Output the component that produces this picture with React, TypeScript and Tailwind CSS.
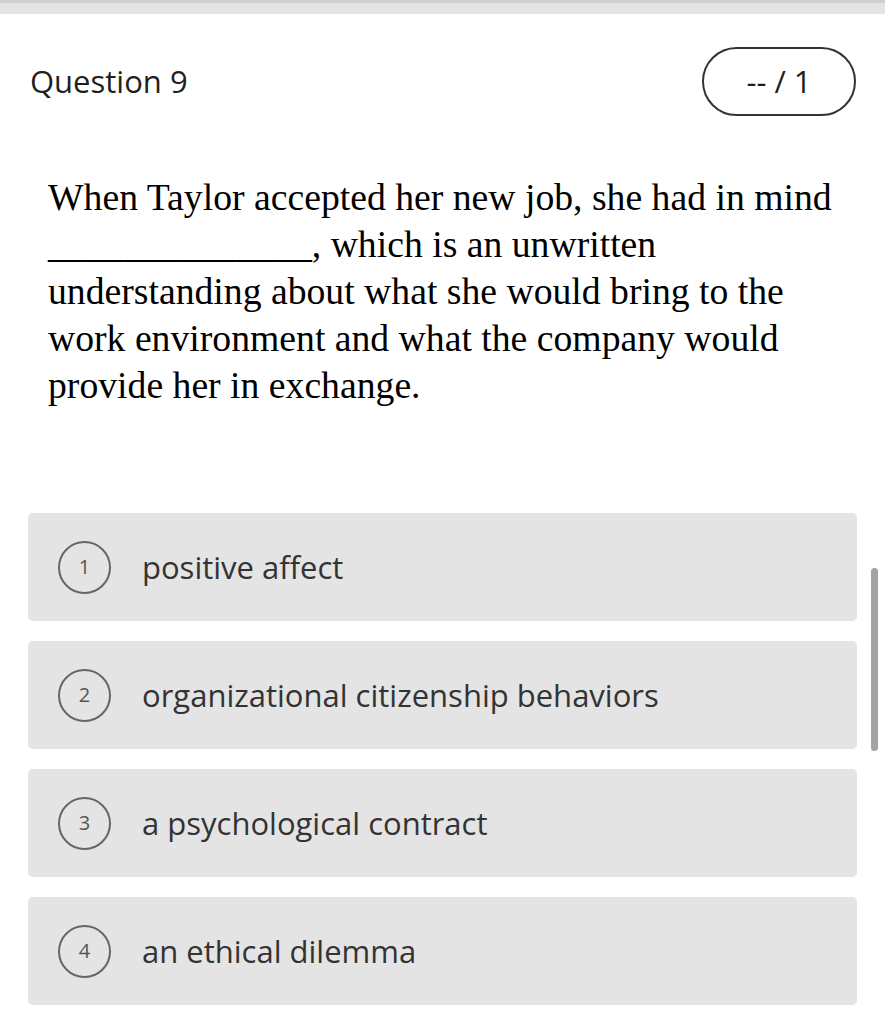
import React from 'react';

const options = [
  'positive affect',
  'organizational citizenship behaviors',
  'a psychological contract',
  'an ethical dilemma',
];

const App: React.FC = () => {
  return (
    <div className="relative w-[885px] h-[1024px] overflow-hidden bg-white font-['Open_Sans',sans-serif]">
      {/* top strip */}
      <div className="h-[14px] border-t-[3px] border-[#cfcfcf] bg-[#e4e4e4]" />

      <div className="flex items-center justify-between pl-[30px] pr-[29px] pt-[33px]">
        <h2 className="text-[31px] leading-none text-[#1f1f1f]">Question 9</h2>
        <div className="flex h-[69px] w-[154px] items-center justify-center rounded-full border-2 border-[#333] text-[31px] text-[#1f1f1f]">
          -- / 1
        </div>
      </div>

      <p className="mt-[58px] pl-[48px] pr-[37px] font-['Liberation_Serif',serif] text-[37.7px] leading-[47px] text-black">
        When Taylor accepted her new job, she had in mind ______________, which is an unwritten understanding about
        what she would bring to the work environment and what the company would provide her in exchange.
      </p>

      <div className="mt-[104px] flex flex-col gap-[20px] pl-[28px] pr-[28px]">
        {options.map((opt, i) => (
          <div key={i} className="flex h-[108px] items-center rounded-[5px] bg-[#e4e4e4] pl-[30px]">
            <div className="flex h-[53px] w-[53px] items-center justify-center rounded-full border-2 border-[#666] text-[20px] text-[#555]">
              {i + 1}
            </div>
            <span className="ml-[31px] text-[31px] text-[#333]">{opt}</span>
          </div>
        ))}
      </div>

      {/* scrollbar */}
      <div className="absolute left-[871px] top-[568px] h-[183px] w-[7px] rounded-full bg-[#a3a3a3]" />
    </div>
  );
};

export default App;
